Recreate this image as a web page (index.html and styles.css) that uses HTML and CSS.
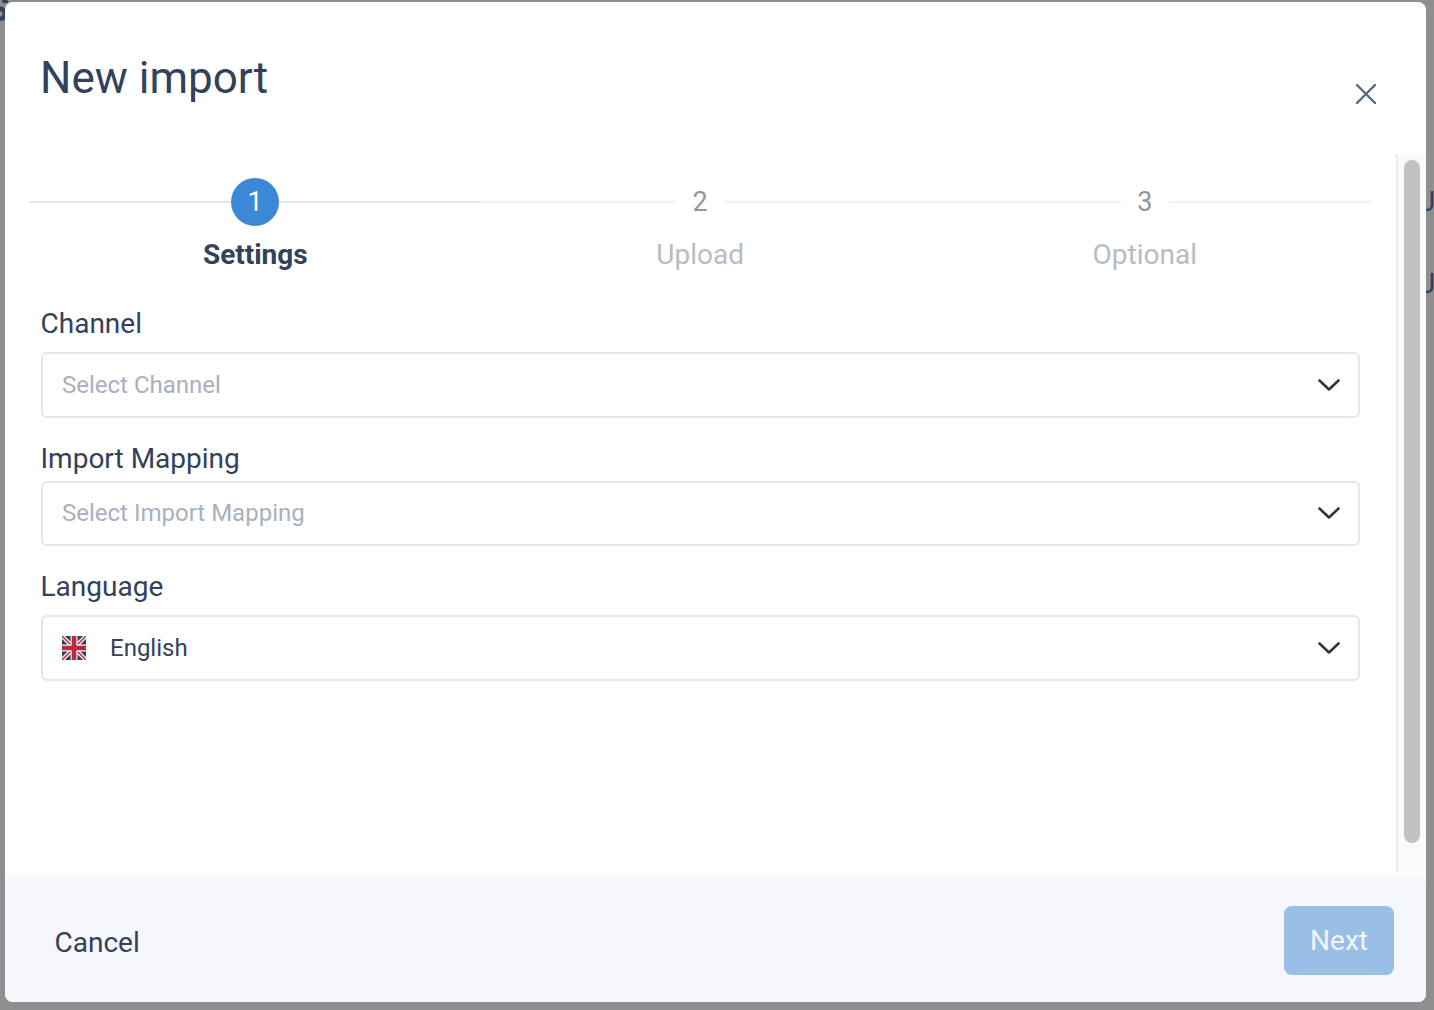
FILE: index.html
```html
<!DOCTYPE html>
<html lang="en">
<head>
<meta charset="utf-8">
<title>New import</title>
<link rel="stylesheet" href="styles.css">
</head>
<body>
<div class="backdrop-text" aria-hidden="true">
  <span class="bg-s">S</span>
  <span class="bg-j bg-j1">J</span>
  <span class="bg-j bg-j2">J</span>
</div>
<main class="modal">
  <header class="modal-header">
    <h1 class="title">New import</h1>
    <button class="close" aria-label="Close">
      <svg width="22" height="22" viewBox="0 0 22 22"><path d="M2 2 L20 20 M20 2 L2 20" fill="none" stroke="#5a6779" stroke-width="2.4" stroke-linecap="round"/></svg>
    </button>
  </header>
  <div class="modal-body">
    <div class="content">
      <div class="steps">
        <div class="step active">
          <div class="step-row">
            <span class="line dark lead"></span>
            <span class="num">1</span>
            <span class="line dark trail"></span>
          </div>
          <div class="step-label">Settings</div>
        </div>
        <div class="step">
          <div class="step-row">
            <span class="line"></span>
            <span class="num">2</span>
            <span class="line"></span>
          </div>
          <div class="step-label">Upload</div>
        </div>
        <div class="step">
          <div class="step-row">
            <span class="line"></span>
            <span class="num">3</span>
            <span class="line"></span>
          </div>
          <div class="step-label">Optional</div>
        </div>
      </div>
      <form class="form">
        <div class="field field-channel">
          <label class="label gap-wide">Channel</label>
          <div class="select tall">
            <span class="placeholder">Select Channel</span>
            <svg class="chev" width="22" height="12" viewBox="0 0 22 12"><path d="M1.5 1.5 L11 10.5 L20.5 1.5" fill="none" stroke="#2d3748" stroke-width="2.6" stroke-linecap="round" stroke-linejoin="round"/></svg>
          </div>
        </div>
        <div class="field field-mapping">
          <label class="label">Import Mapping</label>
          <div class="select">
            <span class="placeholder">Select Import Mapping</span>
            <svg class="chev" width="22" height="12" viewBox="0 0 22 12"><path d="M1.5 1.5 L11 10.5 L20.5 1.5" fill="none" stroke="#2d3748" stroke-width="2.6" stroke-linecap="round" stroke-linejoin="round"/></svg>
          </div>
        </div>
        <div class="field field-language">
          <label class="label gap-wide">Language</label>
          <div class="select tall">
            <svg class="flag" width="24" height="24" viewBox="0 0 24 24">
              <rect width="24" height="24" fill="#2f3d57"/>
              <path d="M0 0 L24 24 M24 0 L0 24" stroke="#f4f4f6" stroke-width="4.2"/>
              <path d="M0 0 L12 12 M24 24 L12 12 M24 0 L12 12 M0 24 L12 12" stroke="#bd2b40" stroke-width="1.5"/>
              <path d="M12 0 V24 M0 12 H24" stroke="#f4f4f6" stroke-width="7"/>
              <path d="M12 0 V24 M0 12 H24" stroke="#b92a3e" stroke-width="4.6"/>
            </svg>
            <span class="value">English</span>
            <svg class="chev" width="22" height="12" viewBox="0 0 22 12"><path d="M1.5 1.5 L11 10.5 L20.5 1.5" fill="none" stroke="#2d3748" stroke-width="2.6" stroke-linecap="round" stroke-linejoin="round"/></svg>
          </div>
        </div>
      </form>
    </div>
    <div class="scrollbar"><div class="thumb"></div></div>
  </div>
  <footer class="modal-footer">
    <button class="cancel">Cancel</button>
    <button class="next">Next</button>
  </footer>
</main>
</body>
</html>
```
FILE: styles.css
```css
* { box-sizing: border-box; }
html, body { margin: 0; height: 100%; }
body {
  width: 1434px;
  height: 1010px;
  overflow: hidden;
  background: #8f8f8f;
  padding: 2px 8px 8px 5px;
  font-family: Roboto, "Liberation Sans", sans-serif;
  color: #33415a;
  position: relative;
}
.backdrop-text { position: absolute; inset: 0; color: #33415a; overflow: hidden; }
.bg-s { position: absolute; left: -13px; top: -9px; font-size: 36px; line-height: 36px; font-weight: 700; }
.bg-j { position: absolute; left: 1420px; font-size: 28px; }
.bg-j1 { top: 185px; }
.bg-j2 { top: 267px; }
.modal {
  position: relative;
  width: 1421px;
  height: 1000px;
  background: #fff;
  border-radius: 8px;
  display: flex;
  flex-direction: column;
  overflow: hidden;
}
.modal-header {
  height: 152px;
  flex: none;
  display: flex;
  justify-content: space-between;
  padding: 48px 49px 0 35px;
}
.title {
  margin: 0;
  font-size: 44px;
  line-height: 56px;
  font-weight: 400;
  color: #33415a;
}
.close {
  width: 22px;
  height: 22px;
  margin-top: 33px;
  padding: 0;
  border: 0;
  background: none;
  display: block;
}
.close svg { display: block; }
.modal-body {
  flex: 1;
  min-height: 0;
  display: flex;
}
.content {
  flex: 1;
  min-width: 0;
  padding: 24px 24px 0 24px;
}
.scrollbar {
  flex: none;
  width: 30px;
  height: 718px;
  background: #fafafa;
  border-left: 2px solid #e6eaf1;
  padding: 6px 6px 0 6px;
}
.thumb {
  width: 16px;
  height: 683px;
  border-radius: 8px;
  background: #c1c2c1;
}
.steps {
  display: grid;
  grid-template-columns: 453.6px 435px 454.4px;
}
.step { display: flex; flex-direction: column; align-items: center; }
.step-row { width: 100%; display: flex; align-items: center; height: 48px; }
.line { flex: 1; height: 2px; background: #eff1f3; }
.line.dark { background: #e2e8f0; }
.line.lead { flex: none; width: 202px; }
.line.trail { flex: none; width: 203px; }
.num {
  flex: none;
  width: 48px;
  height: 48px;
  border-radius: 50%;
  display: flex;
  align-items: center;
  justify-content: center;
  font-size: 27px;
  color: #8f96a0;
}
.active .num { background: #3d88d6; color: #fff; }
.step-label {
  margin-top: 12px;
  font-size: 28px;
  line-height: 34px;
  color: #b7bcc4;
}
.active .step-label { font-weight: 700; color: #33415a; margin-right: 1px; }
.form { padding: 0 12px; display: flex; flex-direction: column; }
.field { display: flex; flex-direction: column; }
.field-channel { margin-top: 35px; }
.field-mapping { margin-top: 24px; }
.field-language { margin-top: 24px; }
.label {
  font-size: 28px;
  line-height: 34px;
  height: 34px;
  margin: 0 0 5px -0.5px;
  color: #33415a;
}
.label.gap-wide { margin-bottom: 11px; }
.select {
  width: 1319px;
  height: 65px;
  border: 2px solid #e2e8f0;
  border-radius: 6px;
  display: flex;
  align-items: center;
  padding: 0 18px 1px 19px;
  background: #fff;
}
.select.tall { height: 66px; padding-bottom: 0; }
.placeholder { font-size: 24px; color: #a7b1bf; }
.value { font-size: 24px; color: #33415a; margin-left: 24px; }
.flag { flex: none; }
.chev { margin-left: auto; flex: none; }
.modal-footer {
  flex: none;
  height: 130px;
  margin-top: auto;
  background: linear-gradient(#fdfdfe 0, #f5f7fb 10px);
  display: flex;
  align-items: center;
  justify-content: space-between;
  padding: 0 32px 0 49.5px;
}
.cancel {
  border: 0;
  background: none;
  padding: 0;
  margin-top: 10px;
  font: 400 28px Roboto, sans-serif;
  color: #33415a;
}
.next {
  width: 110px;
  height: 69px;
  margin-top: 7px;
  border: 0;
  border-radius: 8px;
  background: #98bfe6;
  color: #f1f6fc;
  font: 400 28px Roboto, sans-serif;
  padding-bottom: 2px;
}
```
